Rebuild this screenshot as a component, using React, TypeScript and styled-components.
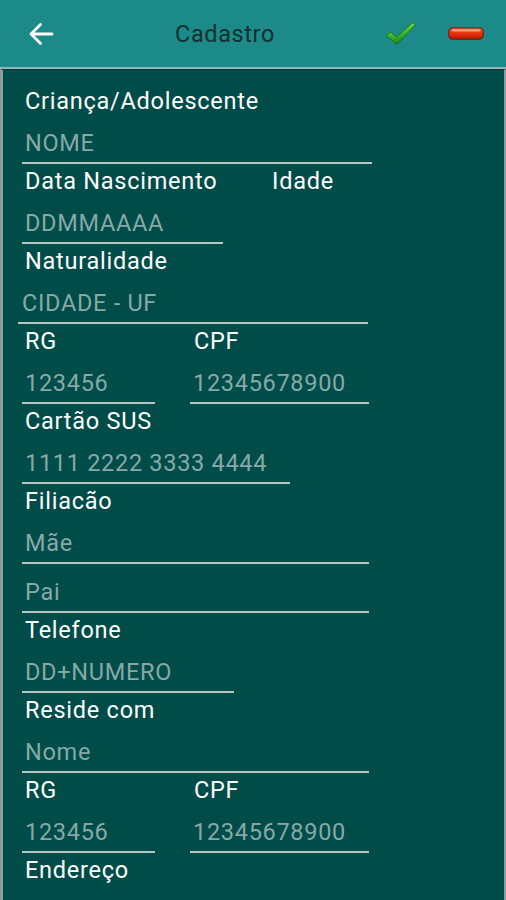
import React from "react";
import styled, { createGlobalStyle } from "styled-components";

const GlobalStyle = createGlobalStyle`
  html, body {
    margin: 0;
    padding: 0;
    background: #004c49;
  }
  body {
    font-family: Roboto, "Noto Sans", sans-serif;
  }
`;

const Screen = styled.div`
  width: 506px;
  height: 900px;
  display: flex;
  flex-direction: column;
  overflow: hidden;
`;

const Header = styled.header`
  height: 67px;
  flex-shrink: 0;
  background: #1b8a88;
  display: flex;
  align-items: center;
  border-bottom: 2px solid #8fb8b6;
`;

const BackButton = styled.button`
  background: none;
  border: none;
  padding: 0;
  margin-left: 28px;
  width: 26px;
  height: 26px;
  display: flex;
  align-items: center;
  justify-content: center;
`;

const Title = styled.h1`
  flex: 1;
  margin: 0;
  padding-left: 10px;
  text-align: center;
  font-size: 23.5px;
  font-weight: 400;
  letter-spacing: 0.6px;
  color: #15302f;
`;

const Actions = styled.div`
  display: flex;
  align-items: center;
  gap: 32px;
  margin-right: 22px;
`;

const Panel = styled.main`
  flex: 1;
  background: #004c49;
  border-left: 3px solid #8e9e9d;
  border-right: 2px solid #8e9e9d;
  border-top: 1px solid #0d3634;
  padding: 14px 0 0 19px;
  display: flex;
  flex-direction: column;
`;

const Label = styled.div`
  box-sizing: border-box;
  height: 31px;
  padding: 3px 0 0 3px;
  font-size: 23.5px;
  letter-spacing: 0.75px;
  line-height: 28px;
  color: #ffffff;
  white-space: nowrap;
`;

const LabelRow = styled.div<{ $cols: string }>`
  display: grid;
  grid-template-columns: ${(p) => p.$cols};
`;

const InputRow = styled.div<{ $cols: string }>`
  display: grid;
  grid-template-columns: ${(p) => p.$cols};
  align-items: end;
`;

const Input = styled.input<{ $w: number; $shift?: number }>`
  box-sizing: border-box;
  width: ${(p) => p.$w}px;
  height: 49px;
  margin-left: ${(p) => p.$shift ?? 0}px;
  padding: 9px 0 0 ${(p) => (p.$shift ? 4 : 3)}px;
  background: transparent;
  border: none;
  border-bottom: 2px solid #b9c4c3;
  outline: none;
  font-family: Roboto, "Noto Sans", sans-serif;
  font-size: 23.5px;
  letter-spacing: 0.7px;
  color: #ffffff;

  &::placeholder {
    color: #86a9a7;
  }
`;

const ArrowIcon = () => (
  <svg width="26" height="26" viewBox="0 0 26 26">
    <path
      d="M24 13H3.5M12.5 3.5L3 13l9.5 9.5"
      fill="none"
      stroke="#ffffff"
      strokeWidth="2.8"
      strokeLinecap="round"
      strokeLinejoin="round"
    />
  </svg>
);

const CheckIcon = () => (
  <svg width="30" height="23" viewBox="0 0 30 23">
    <defs>
      <linearGradient id="chk" x1="0" y1="0" x2="0.3" y2="1">
        <stop offset="0" stopColor="#a6f06a" />
        <stop offset="0.45" stopColor="#4cc830" />
        <stop offset="1" stopColor="#1a861b" />
      </linearGradient>
    </defs>
    <path
      d="M0.6 13.8L4.6 9.8l5.9 5.2L26.8 0.6l2.6 2L11 22.4z"
      fill="url(#chk)"
      stroke="#1c6a18"
      strokeWidth="0.8"
      strokeLinejoin="round"
    />
  </svg>
);

const MinusIcon = () => (
  <svg width="36" height="13" viewBox="0 0 36 13">
    <defs>
      <linearGradient id="mns" x1="0" y1="0" x2="0" y2="1">
        <stop offset="0" stopColor="#ff8a6a" />
        <stop offset="0.35" stopColor="#f23a12" />
        <stop offset="1" stopColor="#b81a06" />
      </linearGradient>
    </defs>
    <rect x="0.8" y="0.8" width="34.4" height="11.4" rx="4" fill="url(#mns)" stroke="#7a1a0c" strokeWidth="1.2" />
    <rect x="4" y="2.4" width="28" height="2.2" rx="1.1" fill="#ffb7a0" opacity="0.7" />
  </svg>
);

export default function App() {
  return (
    <>
      <GlobalStyle />
      <Screen>
        <Header>
          <BackButton aria-label="Voltar">
            <ArrowIcon />
          </BackButton>
          <Title>Cadastro</Title>
          <Actions>
            <CheckIcon />
            <MinusIcon />
          </Actions>
        </Header>

        <Panel>
          <Label>Criança/Adolescente</Label>
          <Input $w={350} placeholder="NOME" />

          <LabelRow $cols="247px 1fr">
            <Label>Data Nascimento</Label>
            <Label>Idade</Label>
          </LabelRow>
          <Input $w={201} placeholder="DDMMAAAA" />

          <Label>Naturalidade</Label>
          <Input $w={350} $shift={-4} placeholder="CIDADE - UF" />

          <LabelRow $cols="169px 1fr">
            <Label>RG</Label>
            <Label>CPF</Label>
          </LabelRow>
          <InputRow $cols="168px 1fr">
            <Input $w={133} placeholder="123456" />
            <Input $w={179} placeholder="12345678900" />
          </InputRow>

          <Label>Cartão SUS</Label>
          <Input $w={268} placeholder="1111 2222 3333 4444" />

          <Label>Filiacão</Label>
          <Input $w={347} placeholder="Mãe" />
          <Input $w={347} placeholder="Pai" />

          <Label>Telefone</Label>
          <Input $w={212} placeholder="DD+NUMERO" />

          <Label>Reside com</Label>
          <Input $w={347} placeholder="Nome" />

          <LabelRow $cols="169px 1fr">
            <Label>RG</Label>
            <Label>CPF</Label>
          </LabelRow>
          <InputRow $cols="168px 1fr">
            <Input $w={133} placeholder="123456" />
            <Input $w={179} placeholder="12345678900" />
          </InputRow>

          <Label>Endereço</Label>
        </Panel>
      </Screen>
    </>
  );
}
